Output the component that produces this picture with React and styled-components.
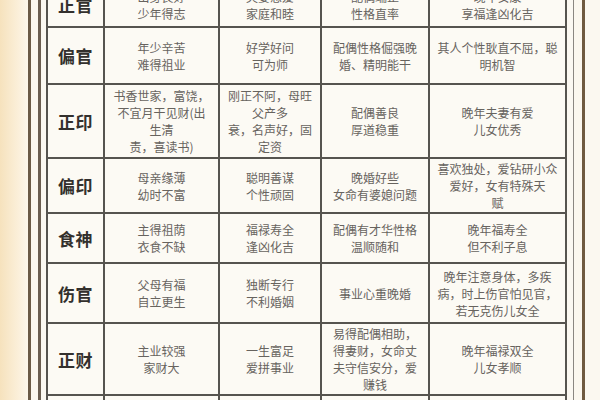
import React from "react";
import styled, { createGlobalStyle } from "styled-components";

const Global = createGlobalStyle`
  html, body { margin: 0; padding: 0; overflow: hidden; }
  body { background: #f7e6c6; font-family: "Noto Sans CJK SC", "Noto Sans", sans-serif; }
`;

const Page = styled.div`
  width: 600px;
  height: 400px;
  overflow: hidden;
  display: flex;
  background: linear-gradient(90deg, #f6e2bd 0px, #fbefd9 18px, #fdf6ea 28px, #fbf8f0 30px);
`;

const OuterFrame = styled.div`
  margin-left: 28px;
  width: 557px;
  box-sizing: border-box;
  height: 100%;
  border-left: 3px solid #6b5a45;
  border-right: 3px solid #6f5a40;
  padding: 0 8px 0 7px;
  background: #fbf7ee;
  display: flex;
`;

const InnerFrame = styled.div`
  flex: 1;
  height: 100%;
  border-left: 3px solid #6b5e50;
  border-right: 1px solid #8a8680;
  padding: 0 8px 0 5px;
  background: #fbf8f1;
  overflow: hidden;
`;

const Table = styled.table`
  margin-top: -19px;
  width: 519px;
  table-layout: fixed;
  border-collapse: collapse;
  background: #fcfaf4;
`;

const Col = styled.col`
  width: ${(p) => p.$w}px;
`;

const Row = styled.tr`
  height: ${(p) => p.$h}px;
`;

const Label = styled.td`
  border: 2px solid #56544f;
  text-align: center;
  vertical-align: middle;
  font-size: 17px;
  font-weight: 700;
  color: #33302d;
  padding: 0;
  letter-spacing: 0.5px;
`;

const Cell = styled.td`
  border: 2px solid #56544f;
  text-align: center;
  vertical-align: middle;
  font-size: 12px;
  line-height: 17px;
  color: #67635e;
  padding: 0 2px;
  white-space: nowrap;
`;

const widths = [57, 115, 102, 108, 137];

const rows = [
  { label: "正官", h: 45, cells: [["出身良好", "少年得志"], ["夫妻恩爱", "家庭和睦"], ["配偶端正", "性格直率"], ["晚年安康", "享福逢凶化吉"]] },
  { label: "偏官", h: 57, cells: [["年少辛苦", "难得祖业"], ["好学好问", "可为师"], ["配偶性格倔强晚", "婚、精明能干"], ["其人个性耿直不屈，聪", "明机智"]] },
  { label: "正印", h: 74, cells: [["书香世家，富饶，", "不宜月干见财(出", "生清", "责，喜读书)"], ["刚正不阿，母旺", "父产多", "衰，名声好，固", "定资"], ["配偶善良", "厚道稳重"], ["晚年夫妻有爱", "儿女优秀"]] },
  { label: "偏印", h: 55, cells: [["母亲缘薄", "幼时不富"], ["聪明善谋", "个性顽固"], ["晚婚好些", "女命有婆媳问题"], ["喜欢独处，爱钻研小众", "爱好，女有特殊天", "赋"]] },
  { label: "食神", h: 50, cells: [["主得祖荫", "衣食不缺"], ["福禄寿全", "逢凶化吉"], ["配偶有才华性格", "温顺随和"], ["晚年福寿全", "但不利子息"]] },
  { label: "伤官", h: 60, cells: [["父母有福", "自立更生"], ["独断专行", "不利婚姻"], ["事业心重晚婚"], ["晚年注意身体，多疾", "病，时上伤官怕见官，", "若无克伤儿女全"]] },
  { label: "正财", h: 72, cells: [["主业较强", "家财大"], ["一生富足", "爱拼事业"], ["易得配偶相助，", "得妻财，女命丈", "夫守信安分，爱", "赚钱"], ["晚年福禄双全", "儿女孝顺"]] },
  { label: "偏财", h: 60, cells: [["父亲有福", "家道兴旺"], ["慷慨大方", "善于交际"], ["配偶贤惠", "感情和顺"], ["对人比较慷慨，花钱", "大方，晚年富足", "福寿双全"]] },
];

export default function App() {
  return (
    <>
      <Global />
      <Page>
        <OuterFrame>
          <InnerFrame>
            <Table>
              <colgroup>
                {widths.map((w, i) => (
                  <Col key={i} $w={w} />
                ))}
              </colgroup>
              <tbody>
                {rows.map((r) => (
                  <Row key={r.label} $h={r.h}>
                    <Label>{r.label}</Label>
                    {r.cells.map((lines, i) => (
                      <Cell key={i}>
                        {lines.map((l, j) => (
                          <React.Fragment key={j}>
                            {j > 0 && <br />}
                            {l}
                          </React.Fragment>
                        ))}
                      </Cell>
                    ))}
                  </Row>
                ))}
              </tbody>
            </Table>
          </InnerFrame>
        </OuterFrame>
      </Page>
    </>
  );
}
